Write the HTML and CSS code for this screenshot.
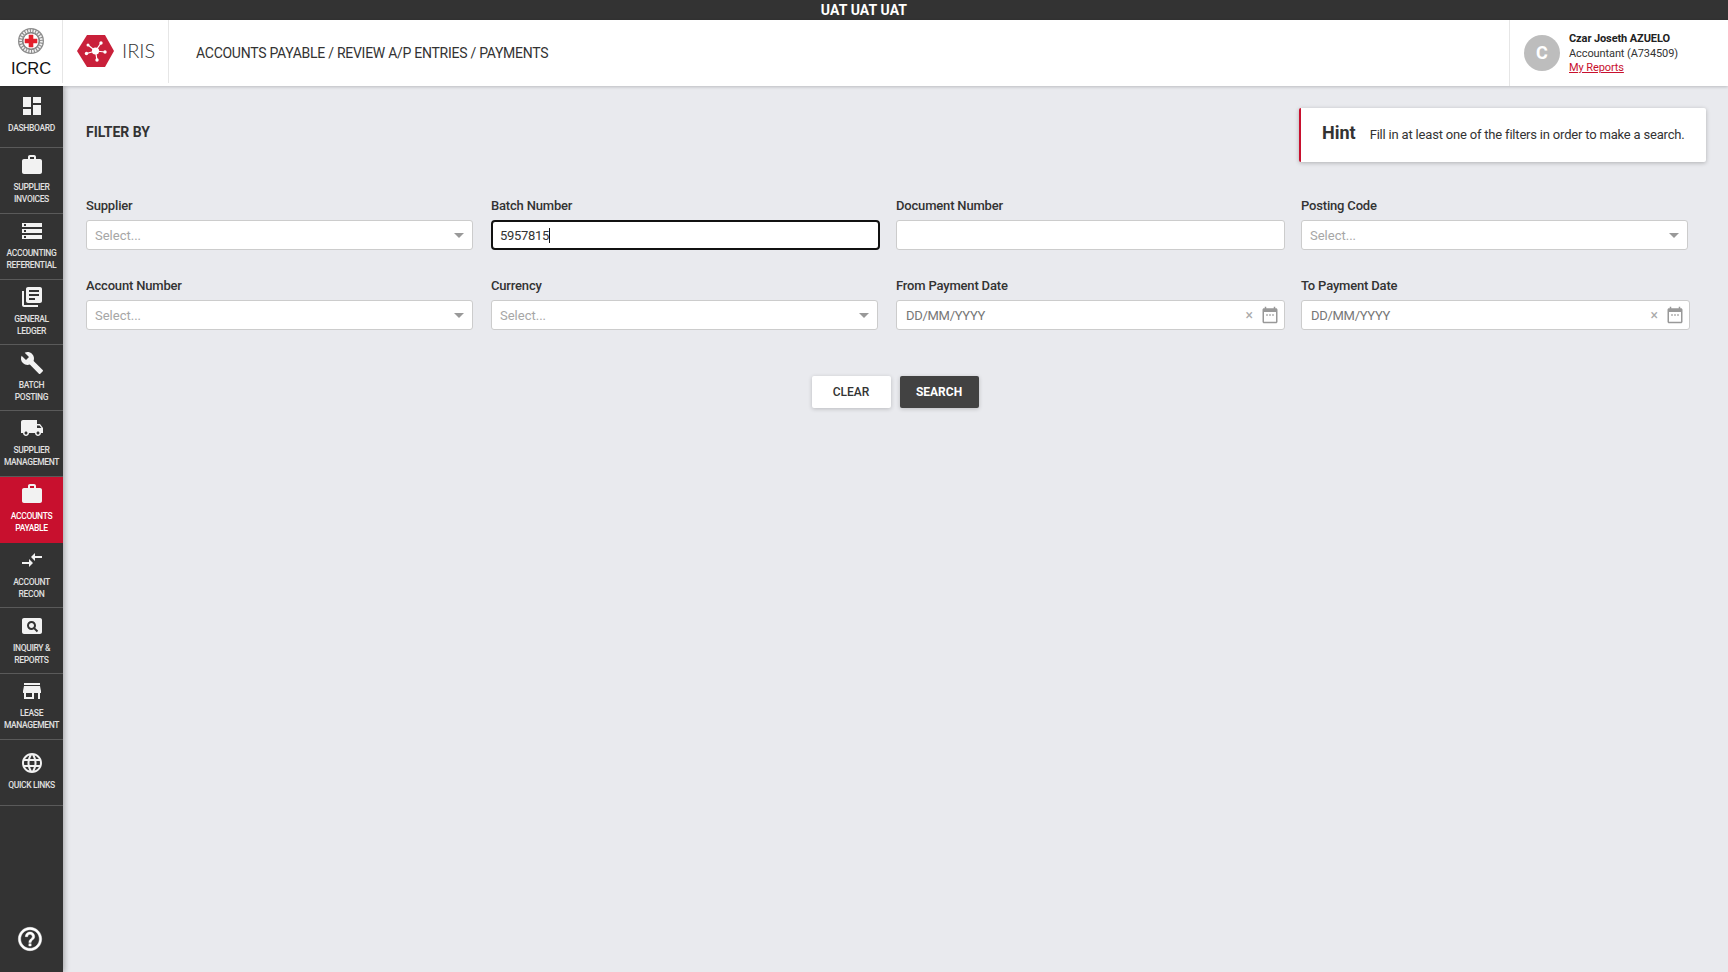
FILE: index.html
```html
<!DOCTYPE html>
<html lang="en">
    <head>
        <meta charset="UTF-8" />
        <meta name="viewport" content="width=device-width, initial-scale=1.0" />
        <title>IRIS - Payments</title>
        <link rel="stylesheet" href="styles.css">
    </head>
    <body>
        <div class="env-bar">UAT UAT UAT</div>
        <header class="header">
            <div class="logo-cell icrc">
                <svg class="icrc-emblem" width="28" height="28" viewBox="0 0 28 28">
                    <circle cx="14" cy="14" r="13" fill="#8d8d8d" />
                    <circle cx="14" cy="14" r="10.4" fill="none" stroke="#f2f2f2" stroke-width="2.6" stroke-dasharray="1.6 1.1" />
                    <circle cx="14" cy="14" r="8" fill="#fff" stroke="#777" stroke-width="0.8" />
                    <path d="M11.7 7.7h4.6v4h4v4.6h-4v4h-4.6v-4h-4v-4.6h4z" fill="#e3202c" />
                </svg>
                <span class="icrc-name">ICRC</span>
            </div>
            <div class="logo-cell iris">
                <svg width="37" height="32" viewBox="0 0 37 32">
                    <polygon points="0,16 10,0 28,0 37,16 28,32 10,32" fill="#c9203a" />
                    <g stroke="#fff" stroke-width="1.2">
                        <line x1="18.5" y1="16" x2="9.5" y2="18.5" />
                        <line x1="18.5" y1="16" x2="11" y2="10" />
                        <line x1="18.5" y1="16" x2="24" y2="8" />
                        <line x1="18.5" y1="16" x2="28" y2="17" />
                        <line x1="18.5" y1="16" x2="20" y2="25" />
                    </g>
                    <g fill="#fff">
                        <circle cx="18.5" cy="16" r="3.6" />
                        <circle cx="9.5" cy="18.5" r="1.7" />
                        <circle cx="11" cy="10" r="1.5" />
                        <circle cx="24" cy="8" r="1.7" />
                        <circle cx="28" cy="17" r="1.7" />
                        <circle cx="20" cy="25" r="1.7" />
                    </g>
                </svg>
                <span class="iris-name">IRIS</span>
            </div>
            <div class="breadcrumb">ACCOUNTS PAYABLE / REVIEW A/P ENTRIES / PAYMENTS</div>
            <div class="user">
                <div class="avatar">C</div>
                <div class="user-text">
                    <div class="user-name">Czar Joseth AZUELO</div>
                    <div class="user-role">Accountant (A734509)</div>
                    <a class="user-link" href="#">My Reports</a>
                </div>
            </div>
        </header>
        <div class="layout">
            <nav class="sidebar">
                <a class="nav-item first" href="#">
                    <svg class="nav-icon" viewBox="0 0 24 24"><path d="M3 13h8V3H3v10zm0 8h8v-6H3v6zm10 0h8V11h-8v10zm0-18v6h8V3h-8z" /></svg>
                    <span>DASHBOARD</span>
                </a>
                <a class="nav-item" href="#">
                    <svg class="nav-icon" viewBox="0 0 24 24"><path d="M20 6h-4V4c0-1.11-.89-2-2-2h-4c-1.11 0-2 .89-2 2v2H4c-1.11 0-1.99.89-1.99 2L2 19c0 1.11.89 2 2 2h16c1.11 0 2-.89 2-2V8c0-1.11-.89-2-2-2zm-6 0h-4V4h4v2z" /></svg>
                    <span>SUPPLIER<br>INVOICES</span>
                </a>
                <a class="nav-item" href="#">
                    <svg class="nav-icon" viewBox="0 0 24 24"><path d="M2 20h20v-4H2v4zm2-3h2v2H4v-2zM2 4v4h20V4H2zm4 3H4V5h2v2zm-4 7h20v-4H2v4zm2-3h2v2H4v-2z" /></svg>
                    <span>ACCOUNTING<br>REFERENTIAL</span>
                </a>
                <a class="nav-item" href="#">
                    <svg class="nav-icon" viewBox="0 0 24 24"><path d="M4 6H2v14c0 1.1.9 2 2 2h14v-2H4V6zm16-4H8c-1.1 0-2 .9-2 2v12c0 1.1.9 2 2 2h12c1.1 0 2-.9 2-2V4c0-1.1-.9-2-2-2zm-1 9H9V9h10v2zm-4 4H9v-2h6v2zm4-8H9V5h10v2z" /></svg>
                    <span>GENERAL<br>LEDGER</span>
                </a>
                <a class="nav-item" href="#">
                    <svg class="nav-icon" viewBox="0 0 24 24"><path d="M22.7 19l-9.1-9.1c.9-2.3.4-5-1.5-6.9-2-2-5-2.4-7.4-1.3L9 6 6 9 1.6 4.7C.4 7.1.9 10.1 2.9 12.1c1.9 1.9 4.6 2.4 6.9 1.5l9.1 9.1c.4.4 1 .4 1.4 0l2.3-2.3c.5-.4.5-1.1.1-1.4z" /></svg>
                    <span>BATCH<br>POSTING</span>
                </a>
                <a class="nav-item" href="#">
                    <svg class="nav-icon" viewBox="0 0 24 24"><path d="M20 8h-3V4H3c-1.1 0-2 .9-2 2v11h2c0 1.66 1.34 3 3 3s3-1.34 3-3h6c0 1.66 1.34 3 3 3s3-1.34 3-3h2v-5l-3-4zM6 18.5c-.83 0-1.5-.67-1.5-1.5s.67-1.5 1.5-1.5 1.5.67 1.5 1.5-.67 1.5-1.5 1.5zm13.5-9l1.96 2.5H17V9.5h2.5zm-1.5 9c-.83 0-1.5-.67-1.5-1.5s.67-1.5 1.5-1.5 1.5.67 1.5 1.5-.67 1.5-1.5 1.5z" /></svg>
                    <span>SUPPLIER<br>MANAGEMENT</span>
                </a>
                <a class="nav-item active" href="#">
                    <svg class="nav-icon" viewBox="0 0 24 24"><path d="M20 6h-4V4c0-1.11-.89-2-2-2h-4c-1.11 0-2 .89-2 2v2H4c-1.11 0-1.99.89-1.99 2L2 19c0 1.11.89 2 2 2h16c1.11 0 2-.89 2-2V8c0-1.11-.89-2-2-2zm-6 0h-4V4h4v2z" /></svg>
                    <span>ACCOUNTS<br>PAYABLE</span>
                </a>
                <a class="nav-item" href="#">
                    <svg class="nav-icon" viewBox="0 0 24 24"><path d="M9.01 14H2v2h7.01v3L13 15l-3.99-4v3zm5.98-1v-3H22V8h-7.01V5L11 9l3.99 4z" /></svg>
                    <span>ACCOUNT<br>RECON</span>
                </a>
                <a class="nav-item" href="#">
                    <svg class="nav-icon" viewBox="0 0 24 24"><path d="M11.5 9C10.12 9 9 10.12 9 11.5s1.12 2.5 2.5 2.5 2.5-1.12 2.5-2.5S12.88 9 11.5 9zM20 4H4c-1.1 0-2 .9-2 2v12c0 1.1.9 2 2 2h16c1.1 0 2-.9 2-2V6c0-1.1-.9-2-2-2zm-3.21 14.21l-2.91-2.91c-.69.44-1.51.7-2.39.7C9.01 16 7 13.99 7 11.5S9.01 7 11.5 7 16 9.01 16 11.5c0 .88-.26 1.69-.7 2.39l2.91 2.9-1.42 1.42z" /></svg>
                    <span>INQUIRY &amp;<br>REPORTS</span>
                </a>
                <a class="nav-item" href="#">
                    <svg class="nav-icon" viewBox="0 0 24 24"><path d="M20 4H4v2h16V4zm1 10v-2l-1-5H4l-1 5v2h1v6h10v-6h4v6h2v-6h1zm-9 4H6v-4h6v4z" /></svg>
                    <span>LEASE<br>MANAGEMENT</span>
                </a>
                <a class="nav-item" href="#">
                    <svg class="nav-icon" viewBox="0 0 24 24"><path d="M11.99 2C6.47 2 2 6.48 2 12s4.47 10 9.99 10C17.52 22 22 17.52 22 12S17.52 2 11.99 2zm6.93 6h-2.95c-.32-1.25-.78-2.45-1.38-3.56 1.84.63 3.37 1.91 4.33 3.56zM12 4.04c.83 1.2 1.48 2.53 1.91 3.96h-3.82c.43-1.43 1.08-2.76 1.91-3.96zM4.26 14C4.1 13.36 4 12.69 4 12s.1-1.36.26-2h3.38c-.08.66-.14 1.32-.14 2 0 .68.06 1.34.14 2H4.26zm.82 2h2.95c.32 1.25.78 2.45 1.38 3.56-1.84-.63-3.37-1.9-4.33-3.56zm2.95-8H5.08c.96-1.66 2.49-2.93 4.33-3.56C8.81 5.55 8.35 6.75 8.03 8zM12 19.96c-.83-1.2-1.48-2.53-1.91-3.96h3.82c-.43 1.43-1.08 2.76-1.91 3.96zM14.34 14H9.66c-.09-.66-.16-1.32-.16-2 0-.68.07-1.35.16-2h4.68c.09.65.16 1.32.16 2 0 .68-.07 1.34-.16 2zm.25 5.56c.6-1.11 1.06-2.31 1.38-3.56h2.95c-.96 1.65-2.49 2.93-4.33 3.56zM16.36 14c.08-.66.14-1.32.14-2 0-.68-.06-1.34-.14-2h3.38c.16.64.26 1.31.26 2s-.1 1.36-.26 2h-3.38z" /></svg>
                    <span>QUICK LINKS</span>
                </a>
                <a class="help" href="#">
                    <svg width="28" height="28" viewBox="0 0 24 24" fill="#fff" stroke="#fff" stroke-width="0.4"><path d="M11 18h2v-2h-2v2zm1-16C6.48 2 2 6.48 2 12s4.48 10 10 10 10-4.48 10-10S17.52 2 12 2zm0 18c-4.41 0-8-3.59-8-8s3.59-8 8-8 8 3.59 8 8-3.59 8-8 8zm0-14c-2.21 0-4 1.79-4 4h2c0-1.1.9-2 2-2s2 .9 2 2c0 2-3 1.75-3 5h2c0-2.25 3-2.5 3-5 0-2.21-1.79-4-4-4z" /></svg>
                </a>
            </nav>
            <main class="main">
                <div class="top-row">
                    <h1 class="filter-title">FILTER BY</h1>
                    <div class="hint">
                        <span class="hint-title">Hint</span>
                        <span class="hint-text">Fill in at least one of the filters in order to make a search.</span>
                    </div>
                </div>
                <div class="filters">
                    <div class="field">
                        <label>Supplier</label>
                        <div class="box select"><span class="placeholder">Select...</span><i class="arrow"></i></div>
                    </div>
                    <div class="field">
                        <label>Batch Number</label>
                        <div class="box focused"><span class="value">5957815</span><i class="caret"></i></div>
                    </div>
                    <div class="field">
                        <label>Document Number</label>
                        <div class="box"></div>
                    </div>
                    <div class="field">
                        <label>Posting Code</label>
                        <div class="box select"><span class="placeholder">Select...</span><i class="arrow"></i></div>
                    </div>
                    <div class="field">
                        <label>Account Number</label>
                        <div class="box select"><span class="placeholder">Select...</span><i class="arrow"></i></div>
                    </div>
                    <div class="field">
                        <label>Currency</label>
                        <div class="box select"><span class="placeholder">Select...</span><i class="arrow"></i></div>
                    </div>
                    <div class="field">
                        <label>From Payment Date</label>
                        <div class="box date">
                            <span class="date-text">DD/MM/YYYY</span>
                            <span class="date-clear">×</span>
                            <svg class="date-icon" width="18" height="18" viewBox="0 0 24 24"><path d="M20 3h-1V1h-2v2H7V1H5v2H4c-1.1 0-2 .9-2 2v16c0 1.1.9 2 2 2h16c1.1 0 2-.9 2-2V5c0-1.1-.9-2-2-2zm0 18H4V8h16v13zM7 11h2v2H7zm4 0h2v2h-2zm4 0h2v2h-2z" /></svg>
                        </div>
                    </div>
                    <div class="field">
                        <label>To Payment Date</label>
                        <div class="box date">
                            <span class="date-text">DD/MM/YYYY</span>
                            <span class="date-clear">×</span>
                            <svg class="date-icon" width="18" height="18" viewBox="0 0 24 24"><path d="M20 3h-1V1h-2v2H7V1H5v2H4c-1.1 0-2 .9-2 2v16c0 1.1.9 2 2 2h16c1.1 0 2-.9 2-2V5c0-1.1-.9-2-2-2zm0 18H4V8h16v13zM7 11h2v2H7zm4 0h2v2h-2zm4 0h2v2h-2z" /></svg>
                        </div>
                    </div>
                </div>
                <div class="actions">
                    <button class="btn">CLEAR</button>
                    <button class="btn btn-dark">SEARCH</button>
                </div>
            </main>
        </div>
    </body>
</html>
```

FILE: styles.css
```css
* {
    box-sizing: border-box;
}
html,
body {
    height: 100%;
}
body {
    margin: 0;
    overflow: hidden;
    display: flex;
    flex-direction: column;
    font-family: Roboto, Arial, sans-serif;
    background-color: #e9eaee;
    color: #333;
}
.env-bar {
    height: 20px;
    flex-shrink: 0;
    background-color: #333;
    color: #fff;
    font-size: 14px;
    font-weight: 700;
    line-height: 20px;
    letter-spacing: 0.1px;
    text-align: center;
}

/* header */
.header {
    position: relative;
    z-index: 2;
    height: 66px;
    flex-shrink: 0;
    display: flex;
    align-items: flex-start;
    background-color: #fff;
    box-shadow: 0 1px 3px rgba(0, 0, 0, 0.2);
}
.logo-cell {
    height: 63px;
    border-right: 1px solid #e6e6e6;
}
.icrc {
    width: 63px;
    display: flex;
    flex-direction: column;
    align-items: center;
    padding-top: 7px;
}
.icrc-name {
    font-family: "Liberation Sans", Arial, sans-serif;
    font-size: 16.5px;
    line-height: 20px;
    letter-spacing: -0.1px;
    color: #111;
    margin-top: 3px;
}
.iris {
    width: 106px;
    display: flex;
    align-items: flex-start;
    padding: 15px 0 0 14px;
}
.iris-name {
    font-family: Lato, Arial, sans-serif;
    font-weight: 300;
    font-size: 20px;
    line-height: 24px;
    color: #333;
    margin-left: 8px;
    margin-top: 3px;
}
.breadcrumb {
    flex: 1;
    font-size: 14px;
    line-height: 66px;
    letter-spacing: -0.27px;
    padding-left: 27px;
    color: #333;
}
.user {
    width: 219px;
    height: 66px;
    display: flex;
    align-items: center;
    padding-left: 14px;
    border-left: 1px solid #e6e6e6;
}
.avatar {
    width: 36px;
    height: 36px;
    border-radius: 50%;
    background-color: #bdbdbd;
    color: #fff;
    font-size: 18px;
    font-weight: 700;
    line-height: 36px;
    text-align: center;
}
.user-text {
    margin-left: 9px;
    margin-top: 2px;
    font-size: 11px;
    line-height: 14.5px;
    letter-spacing: -0.1px;
}
.user-name {
    font-weight: 700;
    color: #222;
}
.user-role {
    color: #333;
}
.user-link {
    color: #c8102e;
}

/* sidebar */
.layout {
    flex: 1;
    display: flex;
    min-height: 0;
}
.sidebar {
    position: relative;
    z-index: 1;
    width: 63px;
    flex-shrink: 0;
    display: flex;
    flex-direction: column;
    background-color: #333;
    box-shadow: 2px 0 5px rgba(0, 0, 0, 0.25);
}
.nav-item {
    height: 65.75px;
    flex-shrink: 0;
    display: flex;
    flex-direction: column;
    align-items: center;
    justify-content: center;
    padding-bottom: 2px;
    border-bottom: 1px solid #5a5a5a;
    color: #e0e0e0;
    font-size: 8.5px;
    font-weight: 500;
    line-height: 12px;
    text-align: center;
    text-decoration: none;
    letter-spacing: -0.35px;
    white-space: nowrap;
}
.nav-item.first {
    height: 62px;
    padding-bottom: 6px;
}
.nav-item.active {
    background-color: #c8102e;
    color: #fff;
    border-bottom-color: #c8102e;
}
.nav-icon {
    width: 24px;
    height: 24px;
    margin-bottom: 4px;
    fill: #f2f2f2;
}
.help {
    margin-top: auto;
    padding: 0 3px 19px 0;
    display: flex;
    justify-content: center;
}

/* filter area */
.main {
    flex: 1;
    padding: 22px 22px 0 23px;
}
.top-row {
    display: flex;
    justify-content: space-between;
    align-items: flex-start;
}
.filter-title {
    margin: 16px 0 0;
    font-size: 14px;
    font-weight: 700;
    line-height: 16px;
    color: #333;
}
.hint {
    width: 407px;
    height: 54px;
    display: flex;
    align-items: center;
    padding: 0 0 5px 21px;
    background-color: #fff;
    border-left: 2px solid #c8102e;
    border-radius: 2px;
    box-shadow: 0 1px 4px rgba(0, 0, 0, 0.25);
}
.hint-title {
    font-size: 18px;
    font-weight: 700;
    color: #333;
}
.hint-text {
    margin-left: 14px;
    margin-top: 4px;
    font-size: 13px;
    letter-spacing: -0.19px;
    color: #333;
}
.filters {
    display: grid;
    grid-template-columns: repeat(4, 1fr);
    row-gap: 28px;
    margin-top: 36px;
}
.field {
    padding-right: 16px;
}
.field label {
    display: block;
    font-size: 13px;
    font-weight: 500;
    line-height: 16px;
    letter-spacing: -0.18px;
    margin-bottom: 6px;
    color: #333;
}
.box {
    height: 30px;
    display: flex;
    align-items: center;
    padding: 0 9px 0 8px;
    background-color: #fff;
    border: 1px solid #ccc;
    border-radius: 3px;
    font-size: 13px;
}
.select {
    margin-right: 2px;
    justify-content: space-between;
    padding-right: 8px;
}
.placeholder {
    color: #a6a6a6;
}
.arrow {
    width: 0;
    height: 0;
    border-left: 5px solid transparent;
    border-right: 5px solid transparent;
    border-top: 5px solid #999;
}
.focused {
    border: 2px solid #111;
    border-radius: 4px;
    padding-left: 7px;
}
.value {
    color: #333;
    letter-spacing: -0.3px;
}
.caret {
    width: 1px;
    height: 15px;
    background-color: #111;
}
.date {
    padding: 0 5px 0 9px;
}
.date-text {
    flex: 1;
    color: #777;
    letter-spacing: -0.3px;
}
.date-clear {
    color: #aaa;
    font-size: 14px;
    margin-right: 8px;
}
.date-icon {
    fill: #999;
}
.actions {
    display: flex;
    justify-content: center;
    gap: 9px;
    margin-top: 46px;
    padding-right: 2px;
}
.btn {
    width: 79px;
    height: 32px;
    padding: 0;
    background-color: #fff;
    border: none;
    border-radius: 2px;
    box-shadow: 0 1px 4px rgba(0, 0, 0, 0.2);
    color: #333;
    font-family: Roboto, Arial, sans-serif;
    font-size: 12px;
    font-weight: 500;
    cursor: pointer;
}
.btn-dark {
    background-color: #424242;
    color: #fff;
    font-weight: 700;
}
```
